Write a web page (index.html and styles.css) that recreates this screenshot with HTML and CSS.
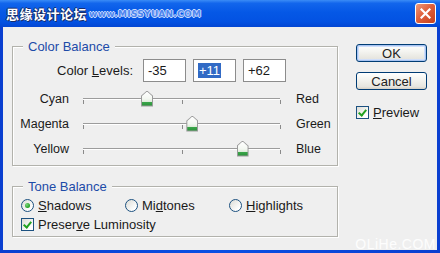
FILE: index.html
```html
<!DOCTYPE html>
<html lang="en">
<head>
  <meta charset="UTF-8">
  <title>Color Balance</title>
  <link rel="stylesheet" href="styles.css">
</head>
<body>
<div class="window">
  <div class="titlebar">
    <span class="title"><span class="title-cn">思缘设计论坛</span><span class="title-url">www.MISSYUAN.COM</span></span>
    <button class="close" aria-label="Close">
      <svg width="11" height="11" viewBox="0 0 11 11"><path d="M1.5 1.5 L9.5 9.5 M9.5 1.5 L1.5 9.5" stroke="#fff" stroke-width="2.2" stroke-linecap="square"/></svg>
    </button>
  </div>

  <div class="client">
    <div class="main">
      <div class="group color-group">
        <span class="legend">Color Balance</span>
        <div class="levels">
          <span class="levels-label">Color <u>L</u>evels:</span>
          <div class="field">-35</div>
          <div class="field"><span class="sel">+11</span></div>
          <div class="field">+62</div>
        </div>

        <div class="sliders">
          <div class="slider-row">
            <span class="left-label">Cyan</span>
            <div class="track">
              <i class="tick tick-start"></i><i class="tick tick-mid"></i><i class="tick tick-end"></i>
              <span class="thumb" style="left: 32.5%"></span>
            </div>
            <span class="right-label">Red</span>
          </div>
          <div class="slider-row">
            <span class="left-label">Magenta</span>
            <div class="track">
              <i class="tick tick-start"></i><i class="tick tick-mid"></i><i class="tick tick-end"></i>
              <span class="thumb" style="left: 55.5%"></span>
            </div>
            <span class="right-label">Green</span>
          </div>
          <div class="slider-row">
            <span class="left-label">Yellow</span>
            <div class="track">
              <i class="tick tick-start"></i><i class="tick tick-mid"></i><i class="tick tick-end"></i>
              <span class="thumb" style="left: 81%"></span>
            </div>
            <span class="right-label">Blue</span>
          </div>
        </div>
      </div>

      <div class="group tone-group">
        <span class="legend">Tone Balance</span>
        <div class="radios">
          <label class="option"><span class="radio checked"></span><span><u>S</u>hadows</span></label>
          <label class="option"><span class="radio"></span><span>Mi<u>d</u>tones</span></label>
          <label class="option"><span class="radio"></span><span><u>H</u>ighlights</span></label>
        </div>
        <label class="option luminosity"><span class="box checked"></span><span>Preser<u>v</u>e Luminosity</span></label>
      </div>
    </div>

    <div class="side">
      <button class="btn btn-default">OK</button>
      <button class="btn">Cancel</button>
      <label class="option preview"><span class="box checked"></span><span><u>P</u>review</span></label>
    </div>
  </div>

  <span class="watermark">OLiHe.COM</span>
</div>
</body>
</html>
```

FILE: styles.css
```css
:root {
  --face: #efefef;
  --group-line: #b2b2ac;
  --legend: #1d4ba8;
  --control-border: #1c5180;
  --check-green: #21a121;
  --text: #1a1a1a;
}

body {
  margin: 0;
  font-family: 'Liberation Sans', Arial, sans-serif;
  font-size: 12px;
  color: var(--text);
}

.window {
  position: relative;
  width: 440px;
  height: 253px;
  display: flex;
  flex-direction: column;
  background: linear-gradient(90deg, #0a3fd0, #0a50e4 50%, #0a3fd0);
  overflow: hidden;
}

/* title bar */

.titlebar {
  height: 27px;
  flex: none;
  display: flex;
  align-items: center;
  justify-content: space-between;
  padding: 0 4px 0 6px;
  background: linear-gradient(#3b8cf6 0, #1266ec 12%, #0558e6 45%, #0352e2 80%, #0346d3 100%);
}

.title {
  display: flex;
  align-items: center;
  gap: 2px;
  color: #fff;
}

.title-cn {
  font-family: 'Noto Sans CJK SC', sans-serif;
  font-weight: bold;
  font-size: 13px;
  letter-spacing: 0.5px;
  text-shadow: 1px 1px 0 #1a2e6a, -1px 0 0 #1a2e6a, 0 -1px 0 #1a2e6a;
}

.title-url {
  font-family: 'DejaVu Sans', sans-serif;
  font-weight: bold;
  font-size: 9px;
  letter-spacing: 0.3px;
  color: #4f86ee;
  text-shadow: 1px 0 0 #c9dcff, -1px 0 0 #c9dcff, 0 1px 0 #c9dcff, 0 -1px 0 #c9dcff;
}

.close {
  width: 21px;
  height: 21px;
  padding: 0;
  display: flex;
  align-items: center;
  justify-content: center;
  border: 1px solid #fff;
  border-radius: 3px;
  background: linear-gradient(135deg, #ed9a7c, #e0603c 45%, #c4401c);
}

/* dialog face */

.client {
  flex: 1;
  margin: 0 3px 3px;
  display: flex;
  padding-left: 9px;
  background: var(--face);
}

.main {
  width: 326px;
  padding-top: 19px;
}

.group {
  position: relative;
  border: 1px solid var(--group-line);
  box-shadow: 1px 1px 0 #fff, inset 1px 1px 0 #fff;
}

.legend {
  position: absolute;
  top: -8px;
  left: 10px;
  padding: 0 5px;
  font-size: 13px;
  line-height: 15px;
  color: var(--legend);
  background: var(--face);
}

.color-group {
  padding: 12px 0 4px;
}

.levels {
  display: flex;
  align-items: center;
  height: 23px;
}

.levels-label {
  width: 120px;
  margin-right: 10px;
  text-align: right;
  font-size: 13px;
}

.field {
  width: 43px;
  height: 23px;
  box-sizing: border-box;
  margin-right: 7px;
  padding-left: 4px;
  display: flex;
  align-items: center;
  border: 1px solid #8c8c8c;
  background: #fff;
  font-size: 13px;
}

.sel {
  padding: 0 1px;
  line-height: 15px;
  color: #fff;
  background: #316ac5;
}

.sliders {
  margin-top: 4px;
}

.slider-row {
  height: 25px;
  display: flex;
  align-items: center;
  font-size: 12.5px;
}

.left-label {
  width: 56px;
  text-align: right;
}

.right-label {
  margin-left: 16px;
}

.track {
  position: relative;
  width: 197px;
  height: 0;
  margin-left: 14px;
  border-top: 1px solid #9c9c9c;
  border-bottom: 1px solid #fff;
}

.tick {
  position: absolute;
  top: 1px;
  width: 1px;
  height: 4px;
  background: #8a8a8a;
}

.tick-start { left: 0; }
.tick-mid { left: 50%; }
.tick-end { left: 100%; }

.thumb {
  position: absolute;
  top: -8px;
  width: 12px;
  height: 16px;
  transform: translateX(-50%);
  background: #9b9b9b;
  clip-path: polygon(50% 0, 100% 33%, 100% 100%, 0 100%, 0 33%);
}

.thumb::before {
  content: "";
  position: absolute;
  inset: 1px;
  clip-path: polygon(50% 0, 100% 32%, 100% 100%, 0 100%, 0 32%);
  background: linear-gradient(#ffffff, #f3f7f1 50%, #dcebd8 70%, #3aa64a 72%, #2a9139);
}

.tone-group {
  margin-top: 20px;
  padding: 12px 8px 5px;
}

.radios {
  display: grid;
  grid-template-columns: 104px 104px 104px;
}

.option {
  display: flex;
  align-items: center;
  gap: 4px;
  height: 13px;
  font-size: 13px;
}

.luminosity {
  margin-top: 6px;
}

.radio,
.box {
  position: relative;
  width: 13px;
  height: 13px;
  box-sizing: border-box;
  flex: none;
  border: 1px solid var(--control-border);
  background: linear-gradient(135deg, #dcdcd6, #ffffff 80%);
}

.radio {
  border-radius: 50%;
}

.radio.checked::after {
  content: "";
  position: absolute;
  left: 3px;
  top: 3px;
  width: 5px;
  height: 5px;
  border-radius: 50%;
  background: radial-gradient(circle at 35% 35%, #7ed47e, var(--check-green) 70%);
}

.box.checked::after {
  content: "";
  position: absolute;
  left: 3px;
  top: 1px;
  width: 3px;
  height: 6px;
  border: solid var(--check-green);
  border-width: 0 2px 2px 0;
  transform: rotate(40deg);
}

/* buttons column */

.side {
  width: 71px;
  margin-left: 18px;
  padding-top: 17px;
  display: flex;
  flex-direction: column;
}

.btn {
  height: 18px;
  padding: 0;
  border: 1px solid #003c74;
  border-radius: 3px;
  background: linear-gradient(#ffffff, #f4f4f0 40%, #e6e5df 85%, #d6d0c5);
  font-family: inherit;
  font-size: 13px;
  color: #222;
}

.btn + .btn {
  margin-top: 10px;
}

.btn-default {
  box-shadow: inset 0 0 0 1px #a8c4f2, inset 0 0 0 2px #cfdefa;
}

.preview {
  margin-top: 16px;
}

.watermark {
  position: absolute;
  right: 4px;
  bottom: 1px;
  font-size: 14px;
  letter-spacing: 0.5px;
  color: rgba(255, 255, 255, 0.9);
}
```
